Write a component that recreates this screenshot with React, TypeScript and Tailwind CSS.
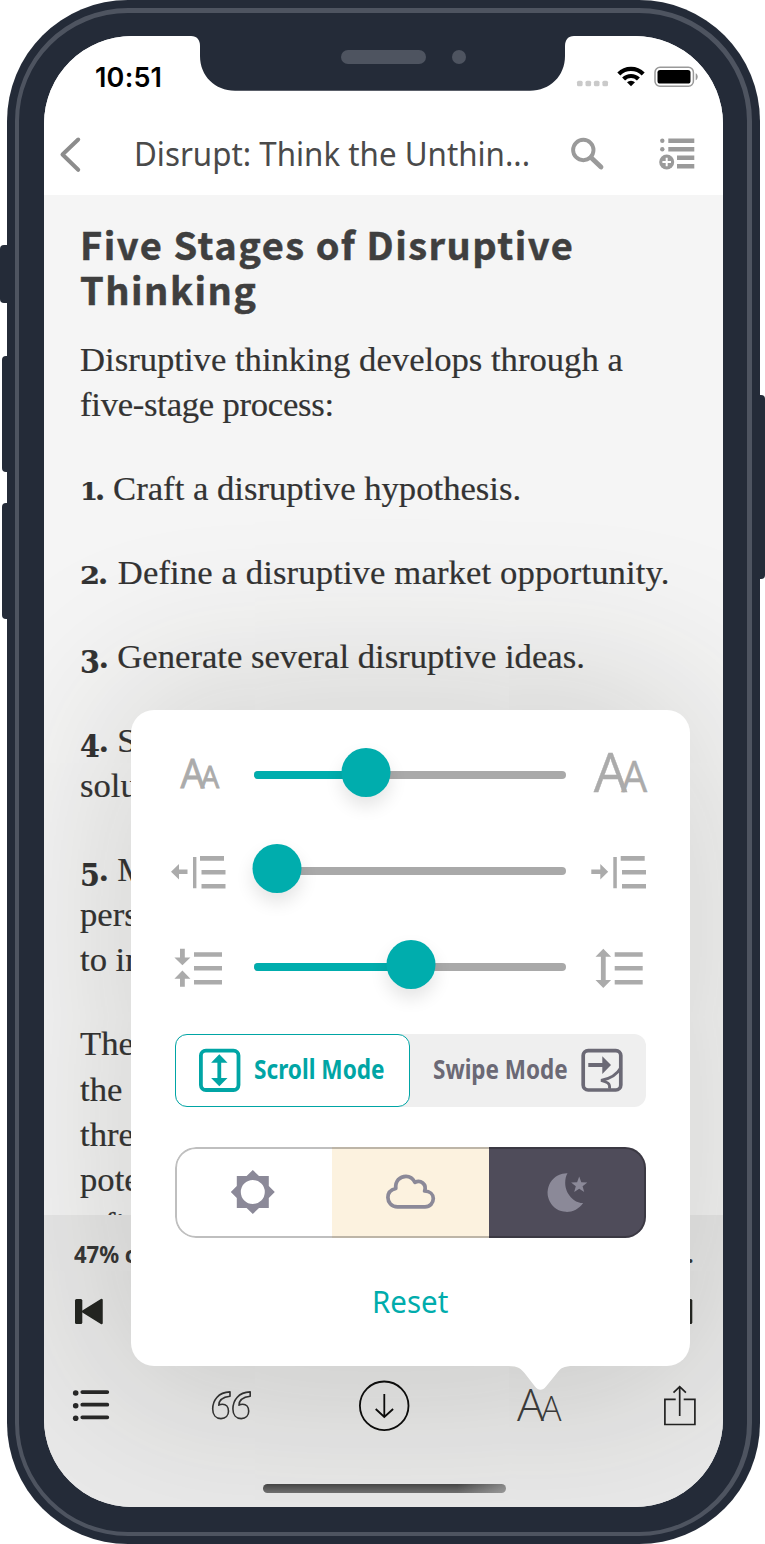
import type { ReactNode } from "react";

function Glyph({ box, className = "", children }: { box: string; className?: string; children: ReactNode }) {
  const [, , w, h] = box.split(" ");
  return (
    <svg viewBox={box} width={w} height={h} className={`shrink-0 ${className}`} aria-hidden="true">
      {children}
    </svg>
  );
}

function LetterPair({ x1, w1, s1, x2, w2, s2, y, weight, fill, stroke = 0 }: {
  x1: number; w1: number; s1: number; x2: number; w2: number; s2: number; y: number; weight: number; fill: string; stroke?: number;
}) {
  return (
    <g fill={fill} stroke={fill} strokeWidth={stroke} fontFamily="'Open Sans', 'Noto Sans', sans-serif" fontWeight={weight}>
      <text x={x1} y={y} fontSize={s1} textLength={w1} lengthAdjust="spacingAndGlyphs">A</text>
      <text x={x2} y={y} fontSize={s2} textLength={w2} lengthAdjust="spacingAndGlyphs">A</text>
    </g>
  );
}

function Slider({ value, fill }: { value: number; fill: boolean }) {
  return (
    <div className="relative h-2 w-[312px] shrink-0 rounded-full bg-[#a9a9a9]">
      {fill && <div className="h-2 rounded-full bg-[#00adad]" style={{ width: value }} />}
      <div
        className="absolute -top-[23px] size-[49px] -translate-x-1/2 rounded-full bg-[#00adad] shadow-[0_9px_18px_rgba(0,0,0,0.11)]"
        style={{ left: value }}
      />
    </div>
  );
}

function SliderRow({ left, right, value, fill = true }: { left: ReactNode; right: ReactNode; value: number; fill?: boolean }) {
  return (
    <div className="flex h-24 items-center gap-6">
      {left}
      <Slider value={value} fill={fill} />
      {right}
    </div>
  );
}

const digitStyles = {
  narrow: "inline-block w-[14px] origin-left scale-x-[1.05] text-[23.5px] leading-none",
  wide: "inline-block w-[17px] origin-left scale-x-[1.17] text-[23.5px] leading-none",
  low: "relative top-[5px] inline-block w-[17.5px] origin-left scale-x-[0.88] text-[31px] leading-none",
};

function Num({ n, kind, className }: { n: string; kind: keyof typeof digitStyles; className: string }) {
  return (
    <span className={`inline-block font-['DejaVu_Serif'] font-bold leading-none tracking-normal ${className}`}>
      <span className={digitStyles[kind]}>{n}</span>
      <span className="text-[29px] leading-none">.</span>
    </span>
  );
}

function Popover() {
  return (
    <div className="absolute left-[87px] top-[673.5px] h-[656.5px] w-[558.5px] rounded-[23px] bg-white pt-[17.5px] shadow-[0_0_190px_rgba(38,38,28,0.23)]">
      <div className="pl-[37px]">
        <SliderRow
          value={111.7}
          left={
            <Glyph box="168 727 62 96">
              <LetterPair x1={180.5} w1={24} s1={39.5} x2={200.8} w2={18.5} s2={30.5} y={788.3} weight={400} stroke={0.8} fill="#ababab" />
            </Glyph>
          }
          right={
            <Glyph box="590 727 62 96">
              <LetterPair x1={593.8} w1={33.5} s1={55.5} x2={621.3} w2={26} s2={43} y={792} weight={400} stroke={0.4} fill="#ababab" />
            </Glyph>
          }
        />
        <SliderRow
          value={22.8}
          fill={false}
          left={
            <Glyph box="168 823 62 96">
              <g fill="#ababab">
                <path d="M171 871.8 179 864v5.6h8.5v4.4H179v5.5z" />
                <path d="M193 857h3.4v31.2H193zM200 856h24v4.7h-24zM201.5 870h24v4.6h-24zM201.5 884h24v4.6h-24z" />
              </g>
            </Glyph>
          }
          right={
            <Glyph box="590 823 62 96">
              <g fill="#ababab">
                <path d="M608.2 871.8 600.3 864v5.6h-9v4.4h9v5.5z" />
                <path d="M613.3 857h3.5v31.2h-3.5zM620.7 856h24v4.7h-24zM622 870h24v4.6h-24zM622 884h24v4.6h-24z" />
              </g>
            </Glyph>
          }
        />
        <SliderRow
          value={157}
          left={
            <Glyph box="168 919 62 96">
              <g fill="#ababab">
                <path d="M180 948.7h4.8v8.8h5.6l-8 7.8-8-7.8h5.6zM180 986.8h4.8v-8.1h5.6l-8-8.2-8 8.2h5.6z" />
                <path d="M194 952.2h28v4.6h-28zM194 966h28v4.6h-28zM194 980h28v4.6h-28z" />
              </g>
            </Glyph>
          }
          right={
            <Glyph box="590 919 62 96">
              <g fill="#ababab">
                <path d="M603.3 948.7l7.8 8.1h-5.4V980h5.4l-7.8 8.1-7.8-8.1h5.4v-23.2h-5.4z" />
                <path d="M614.7 952.2h28v4.6h-28zM614.7 966h28v4.6h-28zM614.7 980h28v4.6h-28z" />
              </g>
            </Glyph>
          }
        />
      </div>

      <div className="ml-[43.5px] mt-[19px] flex h-[72.5px] w-[471.5px] rounded-xl bg-[#efefef] font-['Noto_Sans'] text-[26px] font-bold">
        <button className="flex w-[235px] items-center rounded-xl border-[1.6px] border-[#00a5a5] bg-white pl-[22px] text-[#00a5a5]">
          <Glyph box="198 1047 43 46">
            <rect x="200.9" y="1050.6" width="37.6" height="39.4" rx="5" fill="none" stroke="#00a5a5" strokeWidth="3.8" />
            <path d="M219.3 1054.2l8.2 8.5h-6.3V1078h6.3l-8.2 8.2-8.2-8.2h6.3v-15.3h-6.3z" fill="#00a5a5" />
          </Glyph>
          <span className="-mt-[3px] ml-[13px] w-[140px] origin-left scale-x-[0.87] whitespace-nowrap text-left leading-[30px]">Scroll Mode</span>
        </button>
        <button className="flex flex-1 items-center pl-[23.5px] text-[#6b6975]">
          <span className="-mt-[3px] w-[147px] origin-left scale-x-[0.865] whitespace-nowrap text-left leading-[30px]">Swipe Mode</span>
          <Glyph box="580 1047 45 46">
            <g fill="none" stroke="#6b6975">
              <rect x="583.2" y="1050.6" width="37.6" height="39.4" rx="5" strokeWidth="3.7" />
              <path d="M621 1067.5c-4 7-11 11.500-20 12.800 6 1.400 9.500 3 8.500 8.500" strokeWidth="2.8" />
            </g>
            <path d="M588.300 1062.900h14v-6.700l8.700 8.800-8.700 9v-6.900h-14z" fill="#6b6975" />
          </Glyph>
        </button>
      </div>

      <div className="relative ml-[43.5px] mt-10 flex h-[91px] w-[471.5px] overflow-hidden rounded-[21px]">
        <button className="flex w-[157.5px] items-center justify-center bg-white">
          <Glyph box="230.500 1169 46 46">
            <path fillRule="evenodd" fill="#8b8998" d="M253.300 1170l6.200 6h9.800v9.900l6 6.100-6 6.100v9.900h-9.800l-6.200 6-6.200-6h-9.800v-9.900l-6-6.100 6-6.100V1176h9.800zM253.300 1180a12 12 0 1 0 0 24 12 12 0 1 0 0-24z" />
          </Glyph>
        </button>
        <button className="flex w-[157px] items-center justify-center bg-[#fcf2df]">
          <Glyph box="385 1169 51 46">
            <path fill="none" stroke="#8b8998" strokeWidth="3.700" strokeLinejoin="round" d="M397.500 1206.800C391.500 1206.800 387.900 1202.300 387.900 1197.500C387.900 1192.500 391.500 1189.500 395.800 1188.500C395 1181 400 1176.300 406 1176.300C410 1176.300 413 1178.500 415 1182.300C420.500 1179.500 427 1184 424.600 1191C430 1191.200 433.300 1194.500 433.300 1198.600C433.300 1203 430 1206.800 425 1206.800Z" />
          </Glyph>
        </button>
        <button className="flex flex-1 items-center justify-center bg-[#4f4c5a]">
          <Glyph box="545.500 1169 44 46">
            <path fill="#8b8998" d="M567 1173.300A19.300 19.300 0 1 0 582.600 1203C574 1203.500 564.700 1194 564.700 1183C564.700 1179 565.500 1176 567 1173.300Z" />
            <path fill="#8b8998" d="M578.700 1176.500l2.100 5.700 6 .3-4.700 3.800 1.600 5.800-5-3.300-5 3.300 1.600-5.800-4.700-3.800 6-.3z" />
          </Glyph>
        </button>
        <div className="pointer-events-none absolute inset-0 rounded-[21px] border-2 border-black/25" />
      </div>

      <button className="mt-[41px] block w-full text-center font-['Noto_Sans'] text-[31px] leading-[44px] text-[#00acac]">
        <span className="inline-block scale-x-[0.95]">Reset</span>
      </button>
      <svg viewBox="506 1365 68 27" width="68" height="27" className="absolute left-[375px] top-[655.5px]" aria-hidden="true">
        <path fill="#fff" d="M506 1365v1c13 0 14.500 2.500 18.500 7l10.500 13.500c3.500 4.300 7.500 4.300 11 0l11-13.500c4-5 6-7 17-7v-1z" />
      </svg>
    </div>
  );
}

function StatusIcons() {
  return (
    <Glyph box="576 60 124 34">
      <g fill="#cacaca">
        <rect x="577" y="80.700" width="5.600" height="5.600" rx="1.600" />
        <rect x="585.500" y="80.700" width="5.600" height="5.600" rx="1.600" />
        <rect x="593.900" y="80.700" width="5.600" height="5.600" rx="1.600" />
        <rect x="602.400" y="80.700" width="5.600" height="5.600" rx="1.600" />
      </g>
      <g fill="none" stroke="#000" strokeWidth="4.200">
        <path d="M618.800 73.900a17.200 17.200 0 0 1 24.400 0" />
        <path d="M623.600 79a10.600 10.600 0 0 1 14.800 0" />
      </g>
      <path d="M631 86.300l-4-4a5.800 5.800 0 0 1 8 0z" />
      <rect x="655" y="67.200" width="38.400" height="19" rx="5" fill="none" stroke="#999" strokeWidth="1.500" />
      <rect x="657.500" y="69.900" width="33" height="13.600" rx="2.600" />
      <path d="M695.700 73.200c2.700 1.200 2.700 5.800 0 7z" fill="#999" />
    </Glyph>
  );
}

function Footer() {
  return (
    <footer className="h-[292px] bg-[#e9e9e9]">
      <div className="flex h-[66px] items-center justify-between pl-[30px] pr-[29.500px] pt-[13px] font-['Noto_Sans'] text-[22.500px] font-bold text-[#363636]">
        <span className="origin-left scale-x-[0.98]">47% complete</span>
        <span>.</span>
      </div>
      <div className="flex h-[60px] items-center justify-between pl-[30px] pr-[30px]">
        <Glyph box="74 1298 31 27">
          <rect x="75" y="1299" width="7.300" height="25" rx="1.500" fill="#232521" />
          <path d="M83 1311.500l18.500-11.500v23z" fill="#232521" stroke="#232521" strokeWidth="2.500" strokeLinejoin="round" />
        </Glyph>
        <Glyph box="662 1298 31 27">
          <rect x="685" y="1299" width="7.300" height="25" rx="1.500" fill="#232521" />
          <path d="M684 1311.500l-18.500-11.500v23z" fill="#232521" stroke="#232521" strokeWidth="2.500" strokeLinejoin="round" />
        </Glyph>
      </div>
      <div className="flex h-[128px] items-center pl-7">
        <Glyph box="72 1380 40 50">
          <g fill="#282828">
            <circle cx="75.700" cy="1393" r="2.800" />
            <circle cx="75.700" cy="1405.700" r="2.800" />
            <circle cx="75.700" cy="1418.300" r="2.800" />
          </g>
          <path d="M82.300 1392.100h25M82.300 1404.700h25M82.300 1417.300h25" stroke="#282828" strokeWidth="3.800" strokeLinecap="round" />
        </Glyph>
        <Glyph box="208 1380 46 50" className="ml-24">
          <g fill="none" stroke="#333" strokeWidth="1.600" strokeLinejoin="round">
            <path d="M230 1391.900C218 1392.300 212.700 1400.500 212.700 1409C212.700 1415 216 1418.600 221 1418.600C225.600 1418.600 228.500 1415.500 228.500 1411.300C228.500 1407 226 1404.200 222.500 1404.200C221 1404.200 220 1404.400 218.800 1405.200C218.800 1400 223 1397 230 1396.200Z" />
            <path d="M250.200 1391.900C238.200 1392.300 232.900 1400.500 232.900 1409C232.900 1415 236.200 1418.600 241.200 1418.600C245.800 1418.600 248.700 1415.500 248.700 1411.300C248.700 1407 246.200 1404.200 242.700 1404.200C241.200 1404.200 240.200 1404.400 239 1405.200C239 1400 243.200 1397 250.200 1396.200Z" />
          </g>
        </Glyph>
        <Glyph box="357 1379 54 52" className="ml-[103px]">
          <g fill="none" stroke="#0b0b0b" strokeWidth="1.800">
            <circle cx="384.200" cy="1405.800" r="24.300" />
            <path d="M384.300 1394v23M375.700 1409l8.600 8 8.800-8" />
          </g>
        </Glyph>
        <Glyph box="514 1380 50 50" className="ml-[103px]">
          <LetterPair x1={517} w1={27} s1={45} x2={541} w2={20.500} s2={34.500} y={1421.300} weight={300} fill="#3c3c3c" />
        </Glyph>
        <Glyph box="663 1380 33 50" className="ml-[99px]">
          <path fill="none" stroke="#222" strokeWidth="1.700" d="M675.700 1399.300H664.900v25.200h30v-25.200h-11.200M679.700 1416v-29M673.500 1392.600l6.200-6 6.200 6" />
        </Glyph>
      </div>
      <div className="ml-[219px] mt-[15px] h-[9px] w-[243px] rounded-full bg-[linear-gradient(90deg,transparent_80%,rgba(190,190,190,0.55)),linear-gradient(#474747,#727272)]" />
    </footer>
  );
}

export default function App() {
  return (
    <div className="relative h-[1544px] w-[765px] overflow-hidden bg-white px-[7px] pr-[5px]">
      <div className="absolute left-0 top-[245px] h-[58px] w-3 rounded-sm bg-[#242b38]" />
      <div className="absolute left-[2px] top-[356px] h-[116px] w-3 rounded-sm bg-[#242b38]" />
      <div className="absolute left-[2px] top-[503px] h-[116px] w-3 rounded-sm bg-[#242b38]" />
      <div className="absolute right-0 top-[395px] h-[184px] w-3 rounded-sm bg-[#242b38]" />
      <div className="relative h-[1544px] w-[753px] rounded-[121px] bg-[#242b38] p-2">
        <div className="h-[1528px] w-[737px] rounded-[113px] border-4 border-r-[5px] border-t-[5px] border-[#4e5460] pl-[25px] pt-[23px]">
          <div className="relative h-[1471px] w-[679px] overflow-hidden rounded-[88px] bg-[#f5f5f5]">
            <header className="h-[159px] bg-white">
              <div className="flex h-[76px] items-center justify-between pl-[51px] pr-[23px] pt-1.5">
                <span className="pt-px font-['Inter'] text-[27px] font-semibold leading-[34px] tracking-[0.2px]">10:51</span>
                <StatusIcons />
              </div>
              <div className="flex h-[83px] items-center pl-[14px] pt-[2px]">
                <Glyph box="58 134 24 41">
                  <path d="M78.200 139.500L62.500 154.500 78.200 169.800" fill="none" stroke="#8c8c8c" strokeWidth="4" strokeLinecap="round" strokeLinejoin="round" />
                </Glyph>
                <h1 className="ml-[52px] -mt-[2px] w-[435px] origin-left scale-x-[0.978] whitespace-nowrap font-['Noto_Sans'] text-[32px] leading-[44px] text-[#4a4a4a]">Disrupt: Think the Unthin...</h1>
                <Glyph box="569 134 36 41">
                  <circle cx="583.300" cy="150" r="10.200" fill="none" stroke="#9a9a9a" strokeWidth="3.900" />
                  <path d="M591 157.500l10 9.500" stroke="#9a9a9a" strokeWidth="4.800" strokeLinecap="round" />
                </Glyph>
                <Glyph box="658 134 38 41" className="ml-[53px]">
                  <g fill="#9a9a9a">
                    <circle cx="662.300" cy="140.800" r="2.200" />
                    <circle cx="662.300" cy="149.200" r="2.200" />
                    <path d="M668.300 138.600h26v4.400h-26zM668.300 147h26v4.400h-26zM677 155.500h17.300v4.400H677zM677 164h17.300v4.400H677z" />
                    <circle cx="666.700" cy="162" r="7.500" />
                  </g>
                  <path d="M666.700 157.700v8.600M662.400 162h8.600" stroke="#fff" strokeWidth="2" />
                </Glyph>
              </div>
            </header>

            <main className="h-[1020px] overflow-hidden whitespace-nowrap pl-[36px] pt-[25.500px] text-[#333]">
              <h2 className="font-['Noto_Sans_CJK_SC'] text-[38px] font-bold leading-[45px] tracking-[1.500px] text-[#3f3f3f] [-webkit-text-stroke:0.500px_#3f3f3f]">
                Five Stages of Disruptive<br />Thinking
              </h2>
              <div className="mt-[27px] flex w-[600px] origin-left scale-x-[1.050] flex-col gap-[39px] font-['Liberation_Serif'] text-[33px] leading-[45.100px] [-webkit-text-stroke:0.200px_#333]">
                <p>Disruptive thinking develops through a<br /><span className="tracking-[-0.250px]">five-stage process:</span></p>
                <p><Num n="1" kind="narrow" className="w-[31.500px]" />Craft a disruptive hypothesis.</p>
                <p className="tracking-[0.110px]"><Num n="2" kind="wide" className="w-[36px]" />Define a disruptive market opportunity.</p>
                <p><Num n="3" kind="low" className="w-[35.500px]" />Generate several disruptive ideas.</p>
                <p><Num n="4" kind="low" className="w-[35.500px]" />Shape them into a disruptive<br />solution.</p>
                <p><Num n="5" kind="low" className="w-[35.500px]" />Make a disruptive pitch that will<br />persuade stakeholders<br />to invest in the idea.</p>
                <p>The disruptive hypothesis is<br />the starting point for all<br />three of the ideas with the<br />potential to transform<br />a field.</p>
              </div>
            </main>

            <Footer />
            <Popover />
          </div>
        </div>
        <svg viewBox="189 35 387 57" width="387" height="57" className="absolute left-[182px] top-[35px]" aria-hidden="true">
          <path d="M189 35v1h2c6 0 9 4 9 10v10c0 20 15 34.700 35 34.700h295c20 0 35-14.700 35-34.700V46c0-6 3-10 9-10h2v-1z" fill="#242b38" />
          <rect x="341" y="50" width="85" height="14" rx="7" fill="#4e5460" />
          <circle cx="459" cy="57" r="7" fill="#4e5460" />
        </svg>
      </div>
    </div>
  );
}
